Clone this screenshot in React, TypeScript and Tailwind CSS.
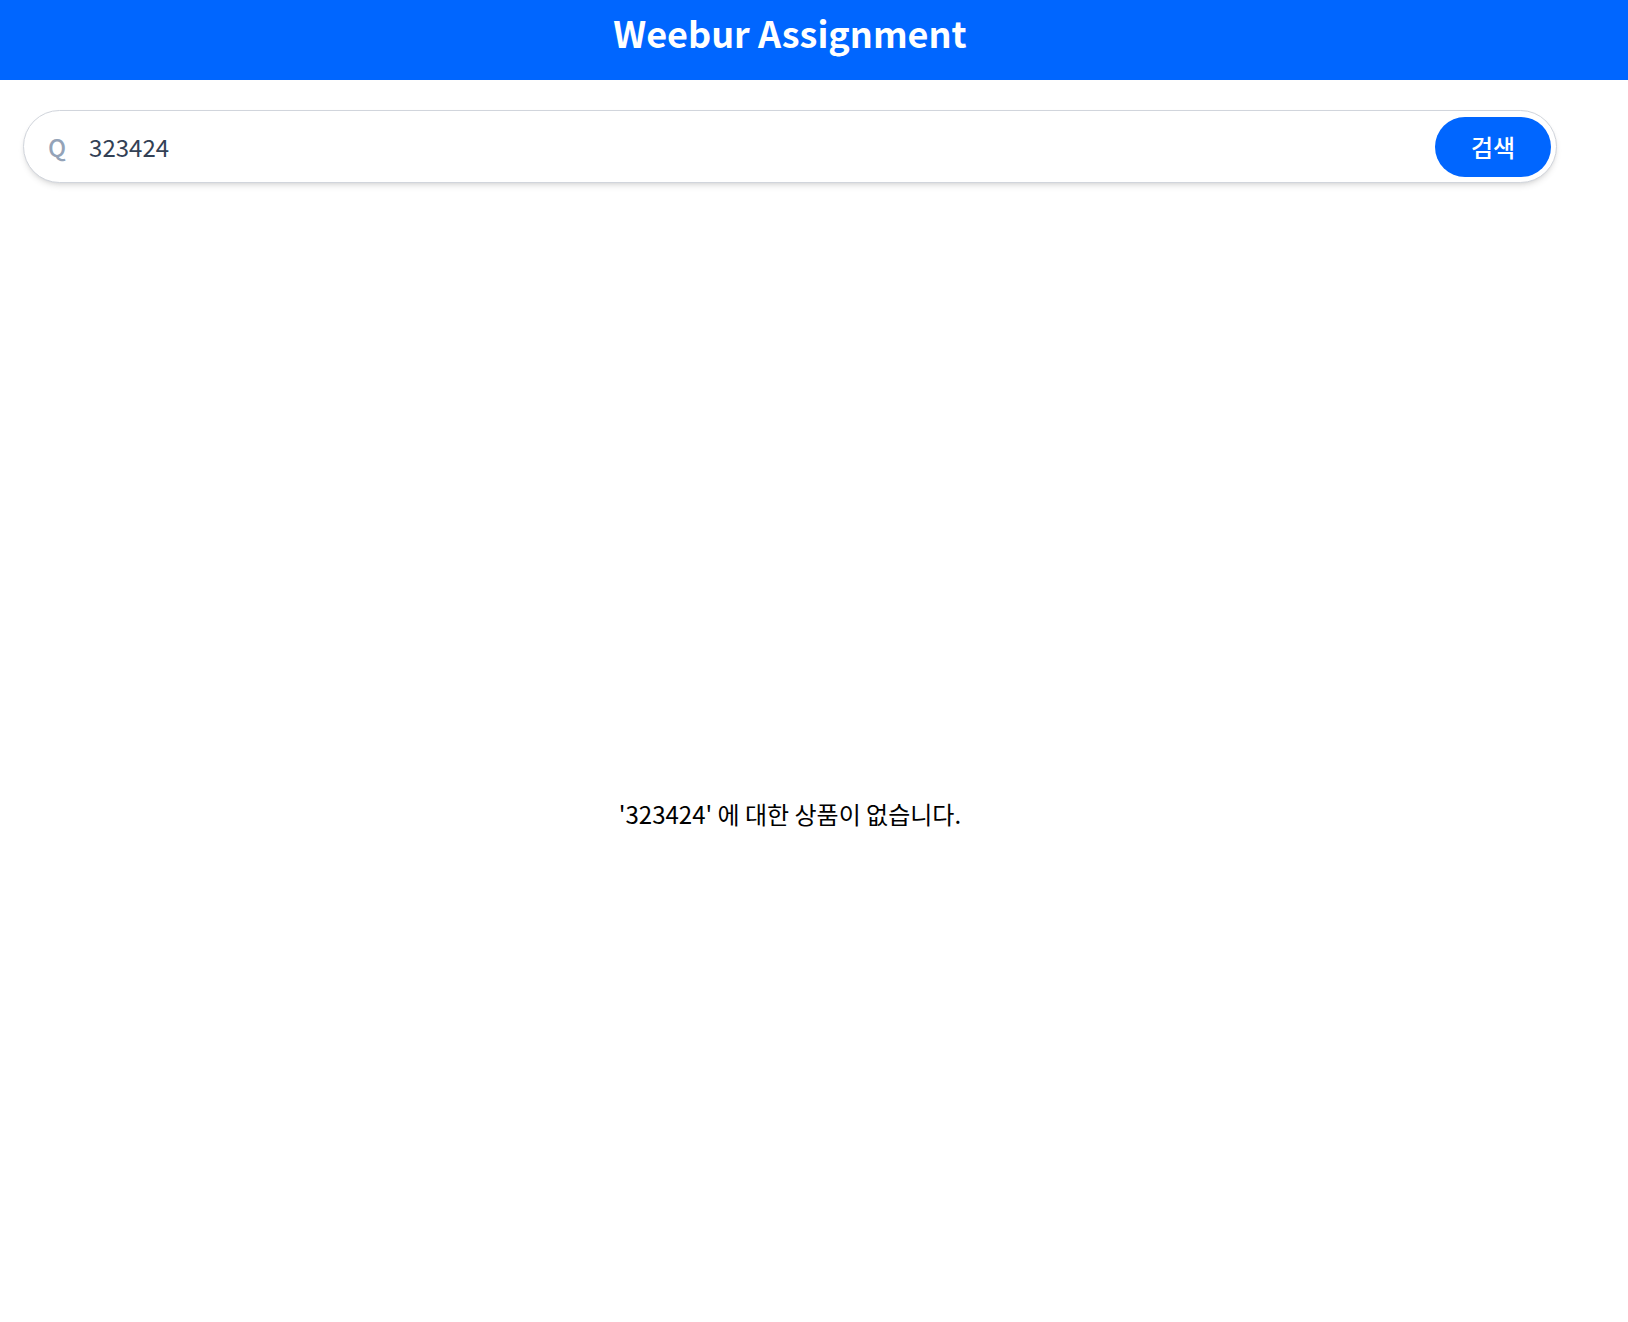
import React from 'react';

const App = () => {
  const query = '323424';

  return (
    <div className="min-h-[1322px] w-full bg-white font-['Noto_Sans_CJK_KR','Noto_Sans',sans-serif]">
      {/* Header */}
      <header className="h-20 w-full bg-[#0066ff]">
        <div className="flex h-full w-[1580px] items-start justify-center pt-[14px]">
          <h1 className="text-[36px] font-bold leading-none text-white">Weebur Assignment</h1>
        </div>
      </header>

      <main className="w-[1580px] px-[23px] pt-[30px]">
        {/* Search bar */}
        <form
          className="flex h-[73px] items-center rounded-full border border-gray-300 bg-white pl-6 pr-[5px] shadow-md"
          onSubmit={(e) => e.preventDefault()}
        >
          <span className="text-2xl font-medium text-[#94a3b8]">Q</span>
          <input
            className="ml-[23px] flex-1 bg-transparent text-2xl text-[#334155] outline-none"
            defaultValue={query}
          />
          <button
            type="submit"
            className="h-[60px] w-[116px] rounded-full bg-[#0066ff] text-2xl font-medium text-white"
          >
            검색
          </button>
        </form>

        {/* Empty result */}
        <div className="flex justify-center pt-[615px]">
          <p className="text-2xl leading-8 text-black">'{query}' 에 대한 상품이 없습니다.</p>
        </div>
      </main>
    </div>
  );
};

export default App;
